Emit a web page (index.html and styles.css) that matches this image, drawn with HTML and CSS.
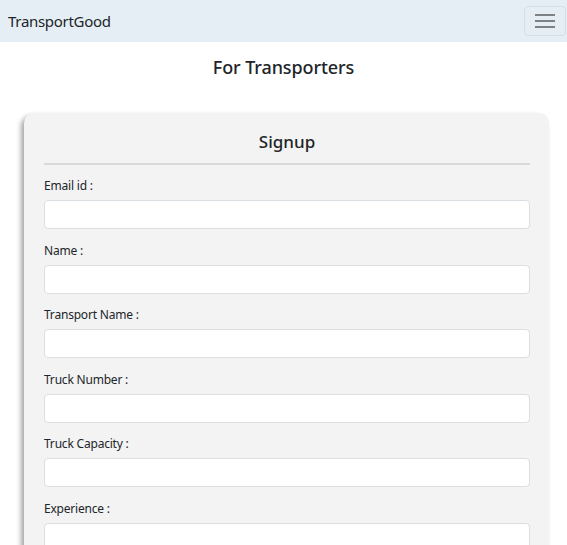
FILE: index.html
```html
<!DOCTYPE html>
<html>
<head>
<meta charset="utf-8">
<link rel="stylesheet" href="styles.css">
</head>
<body>
<nav class="navbar">
  <span class="brand">TransportGood</span>
  <button class="toggler" aria-label="menu">
    <svg width="22" height="16" viewBox="0 0 22 16"><path d="M1 2h20M1 8h20M1 14h20" stroke="#7f8183" stroke-width="2"/></svg>
  </button>
</nav>
<h1 class="title">For Transporters</h1>
<div class="card">
  <h2 class="card-title">Signup</h2>
  <hr class="divider">
  <div class="field"><label>Email id :</label><input type="text"></div>
  <div class="field"><label>Name :</label><input type="text"></div>
  <div class="field"><label>Transport Name :</label><input type="text"></div>
  <div class="field"><label>Truck Number :</label><input type="text"></div>
  <div class="field"><label>Truck Capacity :</label><input type="text"></div>
  <div class="field"><label>Experience :</label><input type="text"></div>
</div>
</body>
</html>
```
FILE: styles.css
```css
body {
  margin: 0;
  font-family: "Noto Sans", "Open Sans", sans-serif;
  color: #212529;
  background: #fff;
  overflow: hidden;
}
.navbar {
  height: 42px;
  background: #e6eef5;
  display: flex;
  align-items: center;
  justify-content: space-between;
  padding: 0 1px 0 8px;
}
.brand {
  font-size: 15px;
  letter-spacing: -0.3px;
}
.toggler {
  width: 42px;
  height: 30px;
  border: 1px solid #d6dde4;
  border-radius: 4px;
  background: transparent;
  display: flex;
  align-items: center;
  justify-content: center;
  padding: 0;
}
.title {
  margin: 12px 0 0;
  text-align: center;
  font-size: 18px;
  font-weight: 500;
  line-height: 26px;
  letter-spacing: -0.1px;
}
.card {
  margin: 33px 18px 0 24px;
  background: #f3f3f3;
  border-radius: 10px;
  box-shadow: -3px 3px 5px rgba(0,0,0,0.35);
  padding: 15px 19px 20px 20px;
}
.card-title {
  margin: 0;
  text-align: center;
  font-size: 17px;
  font-weight: 500;
  line-height: 27px;
}
.divider {
  margin: 8px 0 12px;
  border: 0;
  border-top: 2px solid #d9d9d9;
}
.field {
  display: flex;
  flex-direction: column;
  margin-bottom: 12.6px;
}
.field label {
  font-size: 12px;
  line-height: 18px;
  margin-bottom: 5px;
  letter-spacing: -0.2px;
}
.field input {
  height: 29px;
  box-sizing: border-box;
  border: 1px solid #dadfe4;
  border-radius: 4px;
  background: #fff;
  margin: 0;
}
```
